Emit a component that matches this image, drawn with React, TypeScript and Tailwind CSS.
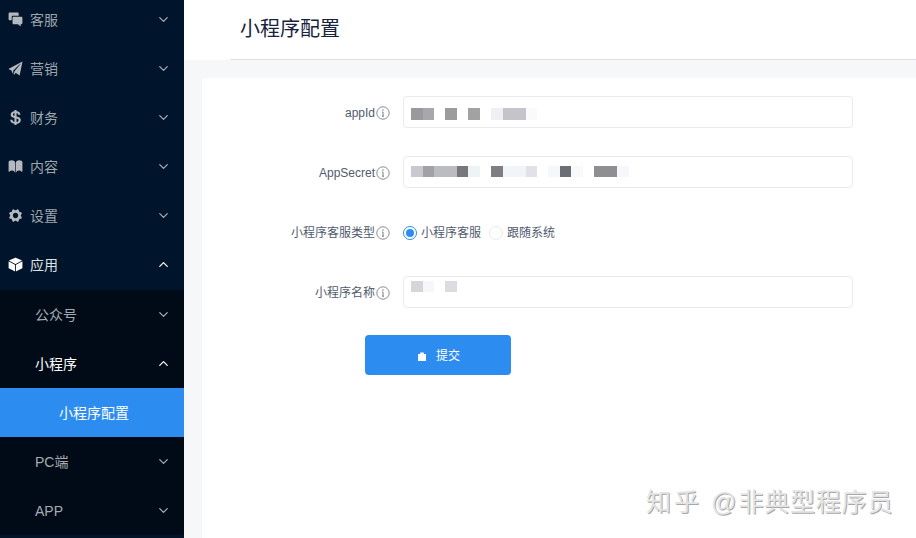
import type { ReactNode } from 'react';
import { IoIosBook, IoIosChatboxes, IoIosCube, IoIosPaperPlane, IoIosSettings, IoLogoUsd } from 'react-icons/io';
import { LuChevronDown, LuChevronUp } from 'react-icons/lu';

const topMenus = [
  { label: '客服', icon: <IoIosChatboxes /> },
  { label: '营销', icon: <IoIosPaperPlane /> },
  { label: '财务', icon: <IoLogoUsd /> },
  { label: '内容', icon: <IoIosBook /> },
  { label: '设置', icon: <IoIosSettings /> },
];

const Arrow = ({ open }: { open?: boolean }) =>
  open ? (
    <LuChevronUp className="w-[15px] h-[15px] text-white" strokeWidth={2} />
  ) : (
    <LuChevronDown className="w-[15px] h-[15px] text-[#a6adb4]" strokeWidth={2} />
  );

const InfoIcon = () => (
  <svg className="w-[14px] h-[14px] ml-px text-[#6b6f76] shrink-0" viewBox="0 0 14 14" fill="none" stroke="currentColor">
    <circle cx="7" cy="7" r="6.2" strokeWidth="0.8" />
    <path d="M7 6v4.2M6 10.2h2M6.2 6H7" strokeWidth="0.9" />
    <circle cx="7" cy="4" r="0.7" fill="currentColor" stroke="none" />
  </svg>
);

// pixelated (mosaic) text blocks inside the inputs
const Mosaic = ({ blocks, className }: { blocks: [string, string][]; className: string }) => (
  <div className={`flex ${className}`}>
    {blocks.map(([w, c], i) => (
      <span key={i} className={`h-full ${w} ${c}`} />
    ))}
  </div>
);

const FormRow = ({ label, children, className }: { label: string; children: ReactNode; className: string }) => (
  <div className={`flex items-center ${className}`}>
    <div className="w-[188px] pt-[2px] flex items-center justify-end text-xs text-[#515a6e]">
      {label}
      <InfoIcon />
    </div>
    <div className="ml-[13px] flex items-center">{children}</div>
  </div>
);

const InputBox = ({ children }: { children: ReactNode }) => (
  <div className="w-[450px] h-[32px] rounded border border-[#e8eaec] bg-white pl-[7px] overflow-hidden">{children}</div>
);

export default function App() {
  return (
    <div
      className="relative flex w-full h-[538px] overflow-hidden bg-[#f5f7f9]"
      style={{ fontFamily: '"Liberation Sans", "Noto Sans CJK SC", sans-serif' }}
    >
      {/* Sidebar */}
      <aside className="w-[184px] shrink-0 bg-[#00152b] text-sm">
        <div className="-mt-[5px]">
          {topMenus.map((m) => (
            <div key={m.label} className="h-[49px] flex items-center pl-[5px] pr-[13px] text-[#9ea5ad]">
              <span className="w-[20px] flex justify-center text-[17px] text-[#b4b9bf]">{m.icon}</span>
              <span className="ml-[5px] flex-1">{m.label}</span>
              <Arrow />
            </div>
          ))}
          <div className="h-[49px] flex items-center pl-[5px] pr-[13px] text-[#dfe2e5]">
            <span className="w-[20px] flex justify-center text-[17px] text-white"><IoIosCube /></span>
            <span className="ml-[5px] flex-1">应用</span>
            <Arrow open />
          </div>
          <div className="mt-[1px] bg-[#010b17]">
            <div className="h-[49px] flex items-center pl-[35px] pr-[13px] text-[#a6abb1]">
              <span className="flex-1">公众号</span>
              <Arrow />
            </div>
            <div className="h-[49px] flex items-center pl-[35px] pr-[13px] text-white">
              <span className="flex-1">小程序</span>
              <Arrow open />
            </div>
            <div className="h-[49px] flex items-center pl-[59px] bg-[#2d8cf0] text-white">小程序配置</div>
            <div className="h-[49px] flex items-center pl-[35px] pr-[13px] text-[#a6abb1]">
              <span className="flex-1">PC端</span>
              <Arrow />
            </div>
            <div className="h-[49px] flex items-center pl-[35px] pr-[13px] text-[#a6abb1]">
              <span className="flex-1">APP</span>
              <Arrow />
            </div>
          </div>
        </div>
      </aside>

      {/* Main */}
      <main className="flex-1 min-w-0 flex flex-col">
        <header className="h-[60px] shrink-0 bg-white pl-[46px]">
          <div className="h-full pl-[10px] border-b border-[#dfe1e5] flex items-center pb-[2px]">
            <h1 className="text-xl leading-none text-[#17233d]">小程序配置</h1>
          </div>
        </header>

        <section className="flex-1 mt-[18px] ml-[18px] bg-white rounded-tl pt-[18px]">
          <FormRow label="appId" className="h-[32px]">
            <InputBox>
              <Mosaic
                className="h-[12px] mt-[11px]"
                blocks={[
                  ['w-[12px]', 'bg-[#9a9a9e]'],
                  ['w-[11px]', 'bg-[#a8a8ac]'],
                  ['w-[11px]', 'bg-white'],
                  ['w-[12px]', 'bg-[#9c9c9e]'],
                  ['w-[11px]', 'bg-white'],
                  ['w-[12px]', 'bg-[#a2a2a4]'],
                  ['w-[11px]', 'bg-white'],
                  ['w-[12px]', 'bg-[#eef0f4]'],
                  ['w-[23px]', 'bg-[#c4c4ca]'],
                  ['w-[11px]', 'bg-[#f9fafc]'],
                ]}
              />
            </InputBox>
          </FormRow>

          <FormRow label="AppSecret" className="h-[32px] mt-[28px]">
            <InputBox>
              <Mosaic
                className="h-[11px] mt-[9px]"
                blocks={[
                  ['w-[12px]', 'bg-[#c8c8ce]'],
                  ['w-[11px]', 'bg-[#a0a2a8]'],
                  ['w-[23px]', 'bg-[#bbbcc2]'],
                  ['w-[11px]', 'bg-[#77777c]'],
                  ['w-[12px]', 'bg-[#eef3f6]'],
                  ['w-[11px]', 'bg-white'],
                  ['w-[12px]', 'bg-[#7e7e82]'],
                  ['w-[23px]', 'bg-[#f1f4f8]'],
                  ['w-[11px]', 'bg-[#e2e2e6]'],
                  ['w-[11px]', 'bg-white'],
                  ['w-[12px]', 'bg-[#f4f8fb]'],
                  ['w-[11px]', 'bg-[#6c6e76]'],
                  ['w-[12px]', 'bg-[#f8f9fa]'],
                  ['w-[11px]', 'bg-white'],
                  ['w-[23px]', 'bg-[#8f8f92]'],
                  ['w-[12px]', 'bg-[#f6f7fa]'],
                ]}
              />
            </InputBox>
          </FormRow>

          <FormRow label="小程序客服类型" className="h-[32px] mt-[28px]">
            <div className="pt-[2px] flex items-center text-xs text-[#515a6e]">
              <span className="w-[14px] h-[14px] rounded-full border border-[#2d8cf0] flex items-center justify-center">
                <span className="w-[8px] h-[8px] rounded-full bg-[#2d8cf0]" />
              </span>
              <span className="ml-[4px]">小程序客服</span>
              <span className="ml-[8px] w-[14px] h-[14px] rounded-full border border-[#e8eaec] bg-white" />
              <span className="ml-[4px]">跟随系统</span>
            </div>
          </FormRow>

          <FormRow label="小程序名称" className="h-[32px] mt-[28px]">
            <InputBox>
              <Mosaic
                className="h-[11px] mt-[4px]"
                blocks={[
                  ['w-[12px]', 'bg-[#d6d6da]'],
                  ['w-[11px]', 'bg-[#f7f7f9]'],
                  ['w-[11px]', 'bg-white'],
                  ['w-[12px]', 'bg-[#dcdce0]'],
                ]}
              />
            </InputBox>
          </FormRow>

          <button className="mt-[27px] ml-[163px] w-[146px] h-[40px] pt-[2px] pl-[2px] rounded bg-[#2d8cf0] text-white text-xs flex items-center justify-center">
            <svg className="w-[8px] h-[9px]" viewBox="0 0 8 9" fill="currentColor">
              <path d="M0 2h2.2V.4h3.6V2H8v7H0z" />
            </svg>
            <span className="ml-[10px]">提交</span>
          </button>
        </section>
      </main>

      {/* Watermark */}
      <div className="absolute left-[646px] top-[484px] flex items-center text-[25px] leading-[36px] text-[#e4e4e4] [text-shadow:1px_1px_0_#a8a8a8] whitespace-nowrap">
        <span className="tracking-[3px]">知乎</span>
        <span className="ml-[9px] mr-[2px]">@</span>
        <span className="tracking-[0.8px]">非典型程序员</span>
      </div>
    </div>
  );
}
